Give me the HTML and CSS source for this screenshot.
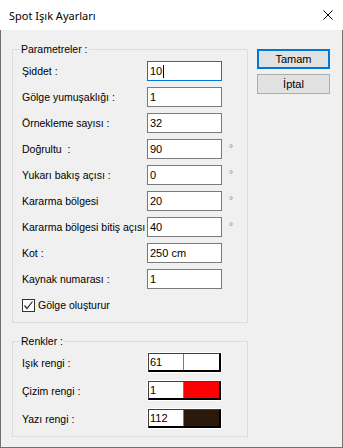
FILE: index.html
```html
<!DOCTYPE html>
<html lang="tr">
<head>
<meta charset="utf-8">
<title>Spot Işık Ayarları</title>
<link rel="stylesheet" href="styles.css">
</head>
<body>
<div class="window">
  <div class="titlebar">
    <span class="title">Spot Işık Ayarları</span>
    <svg class="close" width="10" height="10" viewBox="0 0 10 10"><path d="M0.5 0.5 L9.5 9.5 M9.5 0.5 L0.5 9.5" stroke="#000" stroke-width="1" fill="none"/></svg>
  </div>
  <div class="client">
    <div class="left">
      <fieldset class="group params">
        <legend>Parametreler :</legend>
        <div class="grid">
          <span class="lbl">Şiddet :</span><div class="tb focus">10<span class="caret"></span></div><span></span>
          <span class="lbl">Gölge yumuşaklığı :</span><div class="tb">1</div><span></span>
          <span class="lbl">Örnekleme sayısı :</span><div class="tb">32</div><span></span>
          <span class="lbl">Doğrultu&nbsp; :</span><div class="tb">90</div><span class="deg">°</span>
          <span class="lbl">Yukarı bakış açısı :</span><div class="tb">0</div><span class="deg">°</span>
          <span class="lbl">Kararma bölgesi</span><div class="tb">20</div><span class="deg">°</span>
          <span class="lbl">Kararma bölgesi bitiş açısı</span><div class="tb">40</div><span class="deg">°</span>
          <span class="lbl">Kot :</span><div class="tb">250 cm</div><span></span>
          <span class="lbl">Kaynak numarası :</span><div class="tb">1</div><span></span>
          <label class="check"><span class="box"><svg width="11" height="11" viewBox="0 0 11 11"><path d="M1.5 5.5 L4 8.5 L9.5 1.5" stroke="#222" stroke-width="1.2" fill="none"/></svg></span>Gölge oluşturur</label>
        </div>
      </fieldset>
      <fieldset class="group colors">
        <legend>Renkler :</legend>
        <div class="cgrid">
          <span class="lbl">Işık rengi :</span>
          <div class="cbox"><div class="cin"><span class="num">61</span><span class="sw" style="background:#ffffff"></span></div></div>
          <span class="lbl">Çizim rengi :</span>
          <div class="cbox"><div class="cin"><span class="num">1</span><span class="sw" style="background:#ff0000"></span></div></div>
          <span class="lbl">Yazı rengi :</span>
          <div class="cbox"><div class="cin"><span class="num">112</span><span class="sw" style="background:#2b1a0c"></span></div></div>
        </div>
      </fieldset>
    </div>
    <div class="right">
      <button class="btn default">Tamam</button>
      <button class="btn">İptal</button>
    </div>
  </div>
</div>
</body>
</html>
```
FILE: styles.css
```css
html, body {
  margin: 0;
  padding: 0;
  background: #f0f0f0;
}
.window {
  width: 343px;
  height: 448px;
  display: flex;
  flex-direction: column;
  font-family: "Liberation Sans", Arial, sans-serif;
  font-size: 10.5px;
  color: #000;
}
.titlebar {
  height: 30px;
  background: #fff;
  display: flex;
  align-items: center;
  justify-content: space-between;
  padding: 0 10px 0 9px;
  flex: none;
}
.title {
  font-family: "Noto Sans", "Open Sans", sans-serif;
  font-size: 11px;
}
.close {
  display: block;
}
.client {
  flex: 1;
  border: 1px solid #707070;
  border-top: 0;
  background: #f0f0f0;
  display: flex;
  gap: 9px;
  padding: 13px 0 0 11px;
}
.left {
  width: 236px;
  display: flex;
  flex-direction: column;
  gap: 12px;
}
.group {
  margin: 0;
  border: 1px solid #dcdcdc;
  padding: 0 8px 7px 9px;
  min-width: 0;
}
.group legend {
  padding: 0 1px;
  margin-left: -2px;
  line-height: 13px;
}
.grid {
  display: grid;
  grid-template-columns: 125px 75px 1fr;
  grid-auto-rows: 20px;
  row-gap: 6px;
  align-items: center;
  padding-top: 5px;
}
.lbl {
  white-space: nowrap;
}
.tb {
  box-sizing: border-box;
  height: 20px;
  width: 75px;
  background: #fff;
  border: 1px solid #7a7a7a;
  padding: 0 2px;
  line-height: 18px;
  font-size: 11px;
  display: flex;
  align-items: center;
}
.tb.focus {
  border-color: #0078d7;
}
.caret {
  width: 1px;
  height: 13px;
  background: #000;
  margin-left: 1px;
}
.deg {
  padding-left: 7px;
  color: #7a8fb0;
  font-size: 10px;
  align-self: start;
  line-height: 14px;
  padding-top: 3px;
}
.check {
  grid-column: 1 / 4;
  display: flex;
  align-items: center;
  gap: 3px;
}
.box {
  box-sizing: border-box;
  width: 13px;
  height: 13px;
  border: 1px solid #333;
  background: #fff;
  display: flex;
  align-items: center;
  justify-content: center;
}
.box svg {
  display: block;
}
.cgrid {
  display: grid;
  grid-template-columns: 125px 75px;
  grid-auto-rows: 21px;
  row-gap: 7px;
  align-items: center;
  padding-top: 4px;
  padding-bottom: 0;
}
.cbox {
  box-sizing: border-box;
  height: 21px;
  width: 75px;
  border: 1px solid #fff;
}
.cin {
  box-sizing: border-box;
  height: 100%;
  display: flex;
  border-top: 1px solid #404040;
  border-left: 1px solid #404040;
  border-right: 2px solid #000;
  border-bottom: 2px solid #000;
}
.num {
  width: 33px;
  background: #fff;
  border-right: 1px solid #7a7a7a;
  padding-left: 1px;
  line-height: 16px;
  font-size: 11px;
}
.sw {
  flex: 1;
}
.right {
  display: flex;
  flex-direction: column;
  gap: 5px;
  padding-top: 6px;
}
.btn {
  box-sizing: border-box;
  width: 73px;
  height: 20px;
  margin: 0;
  padding: 0;
  background: #e1e1e1;
  border: 1px solid #adadad;
  font-family: "Liberation Sans", Arial, sans-serif;
  font-size: 11px;
  color: #000;
}
.btn.default {
  border: 2px solid #0078d7;
}
```
